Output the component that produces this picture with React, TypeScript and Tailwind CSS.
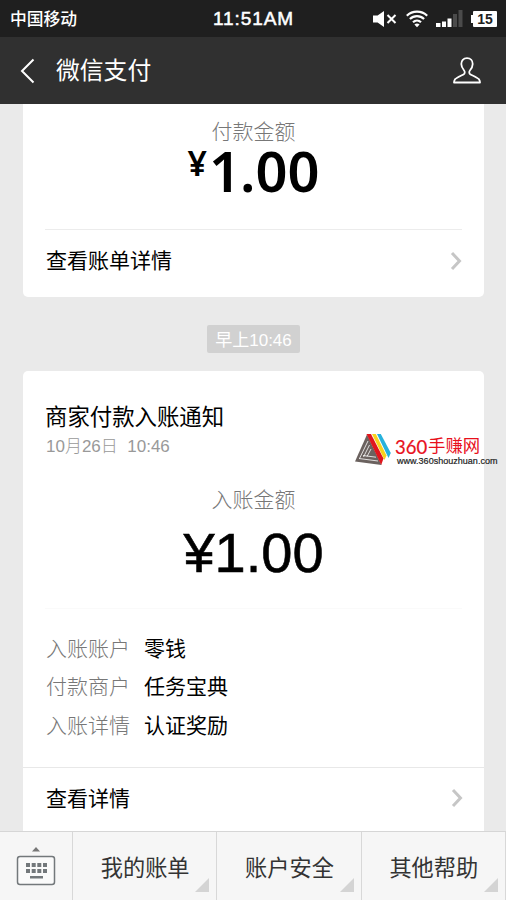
const details = [
  { id: 1, label: "入账账户", value: "零钱" },
  { id: 2, label: "付款商户", value: "任务宝典" },
  { id: 3, label: "入账详情", value: "认证奖励" },
];

const menuItems = [
  { id: 1, title: "我的账单" },
  { id: 2, title: "账户安全" },
  { id: 3, title: "其他帮助" },
];

const StatusBar = () => (
  <div className="relative flex h-[37px] shrink-0 items-center justify-between bg-[#1f1f1f] pl-[10px] pr-[9px] text-white">
    <span className="text-[16.8px] font-medium leading-none">中国移动</span>
    <span className="absolute left-[213px] top-[9px] font-['Liberation_Sans',sans-serif] text-[19px] leading-[20px] tracking-[0.9px] [-webkit-text-stroke:0.5px_white]">
      11:51AM
    </span>
    <div className="flex items-center">
      <svg width="25" height="18" viewBox="0 0 25 18" className="mr-[8px]">
        <path d="M0 5.500h4.600L11 1v16L4.600 12.500H0z" fill="#fff" />
        <path d="M14.500 5l8 8M22.500 5l-8 8" stroke="#fff" strokeWidth="2" />
      </svg>
      <svg width="22" height="18" viewBox="0 0 22 18" className="mr-[8px]" fill="none" stroke="#fff" strokeWidth="2.200">
        <path d="M0.800 5.700a14.800 14.800 0 0 1 20.400 0" />
        <path d="M3.900 9a10.300 10.300 0 0 1 14.200 0" />
        <path d="M7 12.300a5.800 5.800 0 0 1 8 0" />
        <path d="M8.400 14.600a3.800 3.800 0 0 1 5.200 0L11 17.200z" fill="#fff" stroke="none" />
      </svg>
      <svg width="27" height="18" viewBox="0 0 27 18" className="mr-[8px]">
        <path d="M0 13h4.500v4H0zM6 11.500h4V17H6zM11.500 8.500h4V17h-4z" fill="#fff" />
        <path d="M17 4h4v13h-4zM22.500 0h4v17h-4z" fill="#4b4b4b" />
      </svg>
      <div className="flex items-center">
        <span className="h-[8px] w-[2px] bg-white" />
        <span className="flex h-4 w-6 items-center justify-center rounded-[1px] bg-white font-['Liberation_Sans',sans-serif] text-[14px] font-bold leading-none text-[#1f1f1f]">
          15
        </span>
      </div>
    </div>
  </div>
);

const Header = () => (
  <header className="flex h-[67px] shrink-0 items-center bg-[#303030] pl-[20px] pr-[25px] text-white">
    <svg width="15" height="26" viewBox="0 0 15 26" fill="none" stroke="#fff" strokeWidth="2">
      <path d="M13.500 1.500L2 13l11.500 11.500" />
    </svg>
    <h1 className="mb-[4px] ml-[21px] text-[23.800px] font-normal leading-none">微信支付</h1>
    <svg width="28" height="28" viewBox="0 0 28 28" className="ml-auto" fill="none" stroke="#fff" strokeWidth="1.800" strokeLinejoin="round">
      <path d="M14 1.200c-3.700 0-5.700 2.600-5.700 5.900 0 2.800 1.500 4.900 2.800 6.400 0.900 1 0.900 2.900-0.300 3.700-1.300 0.900-7.500 3.300-8.900 5.200-0.700 1-0.900 2.100-0.900 3.100h26c0-1-0.200-2.100-0.900-3.100-1.400-1.900-7.600-4.300-8.900-5.200-1.200-0.800-1.200-2.700-0.300-3.700 1.300-1.500 2.800-3.600 2.800-6.400 0-3.300-2-5.900-5.700-5.900z" />
    </svg>
  </header>
);

const Chevron = () => (
  <svg width="12" height="20" viewBox="0 0 12 20" fill="none" stroke="#c6c6c6" strokeWidth="3">
    <path d="M2 2l7.500 8L2 18" />
  </svg>
);

const PaymentCard = () => (
  <section className="mx-[23px] h-[193px] w-[461px] shrink-0 rounded-b-[5px] bg-white px-[22px]">
    <div className="flex h-[126px] flex-col items-center border-b border-[#ececec]">
      <p className="mt-[15px] text-[21px] font-light leading-[22px] text-[#777]">付款金额</p>
      <p className="mt-[3px] flex items-start font-['Noto_Sans',sans-serif] font-semibold text-black">
        <span className="mt-px text-[34px] leading-[36px]">¥</span>
        <span className="ml-[2px] text-[56px] leading-[52px]">
          <span className="-mr-px">1</span>.00
        </span>
      </p>
    </div>
    <div className="flex h-[62px] items-center justify-between">
      <span className="mb-[3px] ml-px text-[21px] leading-none text-black">查看账单详情</span>
      <Chevron />
    </div>
  </section>
);

const IncomeCard = () => (
  <section className="mx-[23px] flex h-[460px] w-[461px] shrink-0 flex-col rounded-t-[5px] bg-white">
    <div className="px-[22px]">
      <h2 className="mt-[32px] text-[22.400px] font-normal leading-[24px] text-black">商家付款入账通知</h2>
      <p className="mt-[10px] ml-px whitespace-pre font-['Liberation_Sans','Noto_Sans_CJK_SC',sans-serif] text-[17px] font-light leading-[20px] text-[#999]">
        10月26日{"  "}10:46
      </p>
      <p className="mt-[30px] text-center text-[21px] font-light leading-[22px] text-[#777]">入账金额</p>
      <p className="mt-[12px] text-center font-['Liberation_Sans',sans-serif] text-[56px] leading-[64px] text-black [-webkit-text-stroke:0.6px_black]">
        ¥1.00
      </p>
    </div>
    <div className="mx-[22px] mt-[23px] border-t border-[#fafafa] pl-px pt-[19px]">
      {details.map((item) => (
        <div key={item.id} className="flex h-[38.500px] items-center text-[21px] leading-none">
          <span className="w-[98px] font-light text-[#777]">{item.label}</span>
          <span className="text-black">{item.value}</span>
        </div>
      ))}
    </div>
    <div className="mt-auto flex h-[64px] items-center justify-between border-t border-[#e8e8e8] pb-[3px] pl-[23px] pr-[21px]">
      <span className="mb-[2px] text-[21px] leading-none text-black">查看详情</span>
      <Chevron />
    </div>
  </section>
);

const SiteBadge = () => (
  <div className="absolute left-[355px] top-[433px] flex">
    <svg width="36" height="34" viewBox="0 0 36 34">
      <path d="M12 1.500L26.500 32 0 28.500z" fill="#6b625f" />
      <path d="M13 8L4.500 25.500M14.500 12L8.500 24M16 16l-4 7.500M4 25.500l19 2.500M8 22.500l13 1.700" fill="none" stroke="#fff" strokeWidth="0.800" />
      <path d="M11.500 1H16l12.500 24.500-2.300 6.500z" fill="#e0161d" />
      <path d="M17 1h3.800l10.700 21.500-2 4.500z" fill="#f8d21c" />
      <path d="M22 1h3.800l10 19-2.300 5z" fill="#27b2dc" />
    </svg>
    <div className="ml-[4px] whitespace-nowrap">
      <p className="mt-[3px] flex h-[20px] items-center text-[#e8101c]">
        <span className="mt-[1px] w-[33px] font-['Lato',sans-serif] text-[18.500px] leading-[20px] [-webkit-text-stroke:0.2px_#e8101c]">360</span>
        <span className="mb-[2px] text-[17.400px] leading-[20px]">手赚网</span>
      </p>
      <p className="ml-[2px] font-['Liberation_Sans',sans-serif] text-[9px] leading-[10px] tracking-[0.020px] text-[#222] [-webkit-text-stroke:0.2px_#222]">
        www.360shouzhuan.com
      </p>
    </div>
  </div>
);

const BottomMenu = () => (
  <footer className="flex h-[69px] shrink-0 border-t border-[#d6d6d6] bg-[#f6f6f6]">
    <div className="flex w-[73px] justify-center border-r border-[#d8d8d8] pt-[14px]">
      <svg width="40" height="42" viewBox="0 0 40 42">
        <path d="M16 5.500l4-4.500 4 4.500z" fill="#777" />
        <rect x="1.500" y="10.500" width="37" height="28" rx="2.500" fill="#fafafa" stroke="#73787b" strokeWidth="1.500" />
        <path
          d="M10 17h4v4h-4zM15.700 17h4v4h-4zM21.300 17h4v4h-4zM27 17h4v4h-4zM10 23h4v4h-4zM15.700 23h4v4h-4zM21.300 23h4v4h-4zM27 23h4v4h-4zM14 30h13v2.500h-13z"
          fill="#73787b"
        />
      </svg>
    </div>
    {menuItems.map((item) => (
      <div key={item.id} className="relative flex flex-1 items-center justify-center border-r border-[#d8d8d8] pl-px text-[22.200px] leading-none text-[#333]">
        {item.title}
        <svg width="14" height="14" viewBox="0 0 14 14" className="absolute bottom-[8px] right-[7px]">
          <path d="M14 0v14H0z" fill="#d4d4d4" />
        </svg>
      </div>
    ))}
  </footer>
);

export default function App() {
  return (
    <div className="relative flex h-[900px] w-[506px] flex-col overflow-hidden bg-[#eaeaea] font-['Noto_Sans_CJK_SC',sans-serif]">
      <StatusBar />
      <Header />
      <main className="flex h-[727px] shrink-0 flex-col overflow-hidden">
        <PaymentCard />
        <div className="flex h-[74px] shrink-0 items-center justify-center pt-[10px]">
          <span className="flex h-[28px] w-[93px] items-center justify-center rounded-[2px] bg-[#d1d1d1] pl-px pt-[2px] font-['Liberation_Sans','Noto_Sans_CJK_SC',sans-serif] text-[17px] leading-none text-white">
            早上10:46
          </span>
        </div>
        <IncomeCard />
      </main>
      <BottomMenu />
      <SiteBadge />
    </div>
  );
}
